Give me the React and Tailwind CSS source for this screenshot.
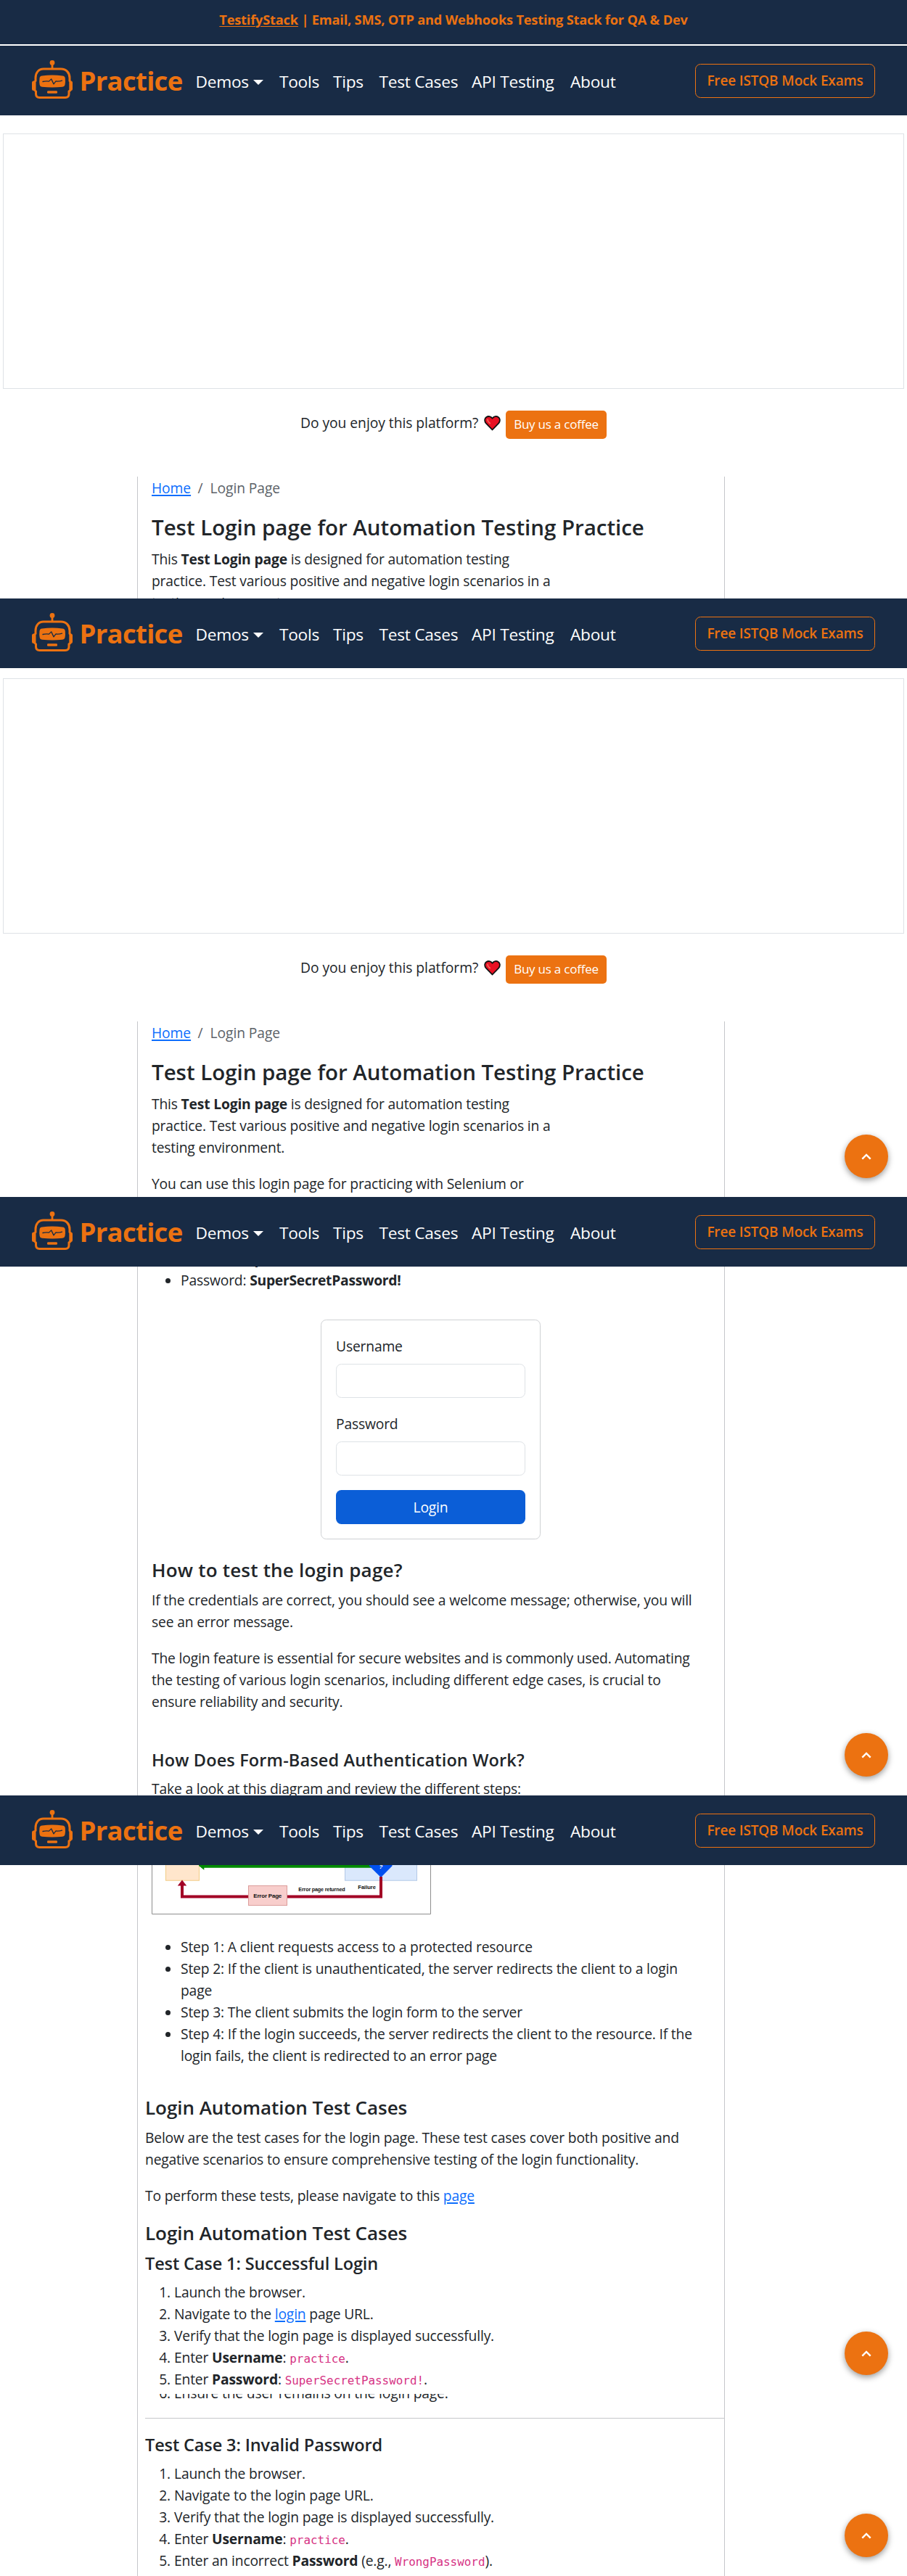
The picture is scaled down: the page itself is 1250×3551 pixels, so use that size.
import React from 'react';

const NAV_ITEMS = [
  { label: 'Tools', width: 'w-[74px]' },
  { label: 'Tips', width: 'w-[63.5px]' },
  { label: 'Test Cases', width: 'w-[127.5px]' },
  { label: 'API Testing', width: 'w-[136px]' },
  { label: 'About', width: 'w-[70px]' },
];

function RobotLogo() {
  return (
    <svg width="56" height="54" viewBox="0 0 56 54" fill="none" className="shrink-0">
      <circle cx="28" cy="3.4" r="3.4" fill="#ec7211" />
      <path d="M28 4v8" stroke="#ec7211" strokeWidth="2.8" />
      <path d="M4 28.5H2.5A2.5 2.5 0 0 0 0 31v8.500a2.500 2.500 0 0 0 2.500 2.500H4zM52 28.500h1.500A2.500 2.500 0 0 1 56 31v8.500a2.500 2.500 0 0 1-2.500 2.500H52z" fill="#ec7211" />
      <path d="M16 12h24c7.500 0 12 5.500 12 12.500v4l.8 1v12l-1.800 1.500v3.500c0 3-1.800 5-5 5H10.500c-3.200 0-5-2-5-5V43L4 41.500v-12l1-1v-4C5 17.500 9 12 16 12z" stroke="#ec7211" strokeWidth="3" fill="#182b45" />
      <path d="M14 21.500q14-1.800 28 0 3.500.4 3.800 3.500.5 4.500-.3 9-.6 2.600-3.500 2.800-14 1.200-28 0-2.900-.2-3.300-2.800-.8-4.500-.2-9 .3-3.100 3.500-3.500z" fill="#ec7211" />
      <path d="M15 29.500q4-.9 8.500-.4l3.200-3.200 3.300 7 3-4q4.500.5 8.500-.8" stroke="#182b45" strokeWidth="1.300" strokeLinejoin="round" strokeLinecap="round" />
      <rect x="21" y="42.200" width="14" height="3.600" rx="1.400" fill="#ec7211" />
    </svg>
  );
}

function Navbar() {
  return (
    <nav className="flex h-24 w-full items-start bg-[#182b45]">
      <div className="flex w-[269.5px] pl-[44px] pt-5">
        <RobotLogo />
        <span className="-mt-[2px] ml-[9.5px] text-[36.500px] leading-[60px] font-bold tracking-[-0.7px] text-[#ec7211]">Practice</span>
      </div>
      <div className="flex pt-[34px] text-[22.7px] leading-[32px] tracking-[-0.26px] text-white">
        <a className="flex w-[115.500px] items-center">
          Demos
          <svg width="14" height="7" viewBox="0 0 14 7" className="ml-[6px]">
            <path d="M0 0h14L7 7z" fill="#fff" />
          </svg>
        </a>
        {NAV_ITEMS.map((item) => (
          <a key={item.label} className={item.width}>{item.label}</a>
        ))}
      </div>
      <a className="mt-[25px] mr-[44px] ml-auto h-[47px] w-[248px] rounded-[7.500px] border border-[#ec7211] text-center text-[19px] leading-[45px] font-semibold tracking-[-0.15px] text-[#ec7211]">
        Free ISTQB Mock Exams
      </a>
    </nav>
  );
}

function Heart() {
  return (
    <svg width="23" height="21" viewBox="0 0 23 21">
      <path d="M11.500 19.500 2.700 10.300C.3 7.500.8 3.600 3.300 2 6 .2 9.500.8 11.500 3.800 13.500.8 17 .2 19.700 2c2.500 1.600 3 5.500.6 8.300z" fill="#e81224" stroke="#111" strokeWidth="1.800" strokeLinejoin="round" />
      <path d="M5 5.200c0 2.300 1.300 3.800 3.300 5.300" stroke="#f4675c" strokeWidth="1.600" fill="none" strokeLinecap="round" />
    </svg>
  );
}

function SupportBlock() {
  return (
    <>
      <div className="mx-1 h-[352px] border border-[#dee2e6]" />
      <div className="flex h-[121px] items-start pt-[30px] pl-[414px]">
        <span className="mt-[2px] w-[252.500px] leading-[30px] tracking-[-0.05px] whitespace-nowrap">Do you enjoy this platform?</span>
        <span className="mt-[7px] w-[30.500px]">
          <Heart />
        </span>
        <a className="h-[39px] w-[139px] rounded-[5px] bg-[#ec7211] text-center text-[17px] leading-[38px] tracking-[-0.22px] text-white">Buy us a coffee</a>
      </div>
    </>
  );
}

function Column({ className = '', children }) {
  return <div className={`ml-[189px] w-[810px] border-x border-[#c5c7ca] pt-px whitespace-nowrap ${className}`}>{children}</div>;
}

function Link({ children }) {
  return <a className="text-[#0d6efd] underline decoration-2 underline-offset-2">{children}</a>;
}

function Code({ children }) {
  return <code className="font-['DejaVu_Sans_Mono',monospace] text-[15.900px] leading-none tracking-normal text-[#d63384]">{children}</code>;
}

function Heading2({ tracking = 'tracking-[-0.05px]', children }) {
  return <h2 className={`mb-2.5 text-[26px] leading-[33px] font-semibold ${tracking}`}>{children}</h2>;
}

function Heading3({ tracking = 'tracking-[-0.12px]', children }) {
  return <h3 className={`mb-2.5 text-[23.500px] leading-[30px] font-semibold ${tracking}`}>{children}</h3>;
}

function Bullet({ children }) {
  return (
    <li className="flex">
      <span className="mt-[12px] mr-[14px] ml-[19px] size-[7px] rounded-full bg-[#212529]" />
      <span>{children}</span>
    </li>
  );
}

function Numbered({ n, children }) {
  return (
    <li className="flex">
      <span className="w-[35px] text-right">{n}.</span>
      <span className="ml-[5px]">{children}</span>
    </li>
  );
}

function PageIntro() {
  return (
    <div className="pl-[19px]">
      <div className="mb-5 flex tracking-[-0.1px]">
        <Link>Home</Link>
        <span className="ml-[9.500px] text-[#5c6268]">/</span>
        <span className="ml-[10px] text-[#5c6268]">Login Page</span>
      </div>
      <h1 className="mb-2.5 text-[29.500px] leading-[37.500px] font-semibold tracking-[-0.03px]">Test Login page for Automation Testing Practice</h1>
      <p className="mb-5">
        This <b>Test Login page</b> is designed for automation testing
        <br />
        practice. Test various positive and negative login scenarios in a
        <br />
        testing environment.
      </p>
      <p>You can use this login page for practicing with Selenium or</p>
    </div>
  );
}

function ScrollTop() {
  return (
    <button className="absolute right-[26px] bottom-[26px] flex size-[60px] items-center justify-center rounded-full bg-[#ec7211] shadow-[0_3px_8px_rgba(0,0,0,0.400)]">
      <svg width="14" height="9" viewBox="0 0 14 9" fill="none">
        <path d="M1.300 7.700 7 2l5.700 5.700" stroke="#fff" strokeWidth="2.400" />
      </svg>
    </button>
  );
}

function Field({ label }) {
  return (
    <div className="mb-5">
      <label className="mb-2.5 block h-[30px] pt-px">{label}</label>
      <div className="h-[47px] rounded-[7.500px] border border-[#dee2e6]" />
    </div>
  );
}

function AuthDiagram() {
  return (
    <svg width="385" height="68" viewBox="0 0 385 68" fill="none" className="block font-['Liberation_Sans',Arial,sans-serif] font-bold tracking-normal">
      <path d="M.5 0v67.500h384V0" stroke="#8e8e8e" />
      <rect x="19.500" y="-5" width="46" height="26.200" fill="#ffe6cc" stroke="#f2cc85" />
      <rect x="266.500" y="-5" width="99" height="26.200" fill="#dae8fc" stroke="#b3c8e6" />
      <path d="M65 1V0h238v3.700H72.300v3z" fill="#008a00" />
      <path d="M300 1.200V0h31.500v1.200L316 17z" fill="#0050ef" />
      <text x="313.500" y="4.500" fontSize="8" fontStyle="italic" fill="#fff">?</text>
      <path d="M316 16v27.500H42V27" stroke="#a20025" strokeWidth="4" />
      <path d="M42 20.500 48.200 28.500H35.800z" fill="#a20025" />
      <rect x="133.500" y="28.500" width="53" height="27" fill="#f8cecc" stroke="#dc9d9b" />
      <text x="140.300" y="44.700" fontSize="8" textLength="39" fill="#111">Error Page</text>
      <text x="202.300" y="36.300" fontSize="7.200" textLength="64.300" fill="#111">Error page returned</text>
      <text x="284.300" y="33" fontSize="7.600" textLength="24.700" fill="#111">Failure</text>
    </svg>
  );
}

export default function App() {
  return (
    <div className="w-[1250px] bg-white font-['Open_Sans','Noto_Sans',sans-serif] text-[19.300px] leading-[30px] tracking-[-0.18px] text-[#212529]">
      <section className="flex h-[825px] flex-col overflow-hidden">
        <div className="mb-0.5 h-[61px] shrink-0 bg-[#182b45] pt-[12px] text-center text-[18.200px] font-bold tracking-[-0.18px] text-[#ec7211]">
          <a className="underline decoration-1 underline-offset-2">TestifyStack</a> | Email, SMS, OTP and Webhooks Testing Stack for QA &amp; Dev
        </div>
        <div className="mb-[25px] shrink-0">
          <Navbar />
        </div>
        <div className="shrink-0">
          <SupportBlock />
        </div>
        <Column className="h-[168px] shrink-0 overflow-hidden">
          <PageIntro />
        </Column>
      </section>

      <section className="relative h-[825px] overflow-hidden">
        <Navbar />
        <div className="mt-[14px]">
          <SupportBlock />
        </div>
        <Column className="h-[242px]">
          <PageIntro />
        </Column>
        <ScrollTop />
      </section>

      <section className="relative h-[825px] overflow-hidden">
        <Navbar />
        <Column className="h-[729px] overflow-hidden">
          <div className="-mt-[27px] pl-[19px]">
            <ul className="mb-[39px]">
              <Bullet>Username: <b>practice</b></Bullet>
              <Bullet>Password: <b className="tracking-[-0.28px]">SuperSecretPassword!</b></Bullet>
            </ul>
            <div className="mb-[26px] ml-[233px] h-[303px] w-[303px] rounded-[7.500px] border border-[#cfd1d4] p-5">
              <Field label="Username" />
              <Field label="Password" />
              <button className="block h-[47px] w-full rounded-[7.500px] bg-[#0b5ed7] leading-[47px] text-white">Login</button>
            </div>
            <Heading2 tracking="tracking-[0.2px]">How to test the login page?</Heading2>
            <p className="mb-5">
              If the credentials are correct, you should see a welcome message; otherwise, you will
              <br />
              see an error message.
            </p>
            <p className="mb-[50px]">
              The login feature is essential for secure websites and is commonly used. Automating
              <br />
              the testing of various login scenarios, including different edge cases, is crucial to
              <br />
              ensure reliability and security.
            </p>
            <Heading3 tracking="tracking-[0.14px]">How Does Form-Based Authentication Work?</Heading3>
            <p>Take a look at this diagram and review the different steps:</p>
          </div>
        </Column>
        <ScrollTop />
      </section>

      <section className="relative h-[825px] overflow-hidden">
        <Navbar />
        <Column className="h-[729px] overflow-hidden">
          <div className="-mt-px mb-[30px] pl-[19px]">
            <AuthDiagram />
          </div>
          <ul className="mb-10 pl-[19px]">
            <Bullet>Step 1: A client requests access to a protected resource</Bullet>
            <Bullet>
              Step 2: If the client is unauthenticated, the server redirects the client to a login
              <br />
              page
            </Bullet>
            <Bullet>Step 3: The client submits the login form to the server</Bullet>
            <Bullet>
              Step 4: If the login succeeds, the server redirects the client to the resource. If the
              <br />
              login fails, the client is redirected to an error page
            </Bullet>
          </ul>
          <div className="pl-[10px]">
            <Heading2>Login Automation Test Cases</Heading2>
            <p className="mb-5">
              Below are the test cases for the login page. These test cases cover both positive and
              <br />
              negative scenarios to ensure comprehensive testing of the login functionality.
            </p>
            <p className="mb-5">
              To perform these tests, please navigate to this <Link>page</Link>
            </p>
            <Heading2>Login Automation Test Cases</Heading2>
            <Heading3>Test Case 1: Successful Login</Heading3>
            <ol>
              <Numbered n={1}>Launch the browser.</Numbered>
              <Numbered n={2}>Navigate to the <Link>login</Link> page URL.</Numbered>
              <Numbered n={3}>Verify that the login page is displayed successfully.</Numbered>
              <Numbered n={4}>Enter <b>Username</b>: <Code>practice</Code>.</Numbered>
              <Numbered n={5}>Enter <b>Password</b>: <Code>SuperSecretPassword!</Code>.</Numbered>
            </ol>
          </div>
        </Column>
        <ScrollTop />
      </section>

      <section className="relative h-[251px] overflow-hidden">
        <Column className="h-[251px] overflow-hidden">
          <div className="-mt-[17px] pl-[10px]">
            <ol className="mb-[19px]">
              <Numbered n={6}>Ensure the user remains on the login page.</Numbered>
            </ol>
            <hr className="mb-[21px] border-[#c5c7ca]" />
            <Heading3>Test Case 3: Invalid Password</Heading3>
            <ol>
              <Numbered n={1}>Launch the browser.</Numbered>
              <Numbered n={2}>Navigate to the login page URL.</Numbered>
              <Numbered n={3}>Verify that the login page is displayed successfully.</Numbered>
              <Numbered n={4}>Enter <b>Username</b>: <Code>practice</Code>.</Numbered>
              <Numbered n={5}>Enter an incorrect <b>Password</b> (e.g., <Code>WrongPassword</Code>).</Numbered>
            </ol>
          </div>
        </Column>
        <ScrollTop />
      </section>
    </div>
  );
}
